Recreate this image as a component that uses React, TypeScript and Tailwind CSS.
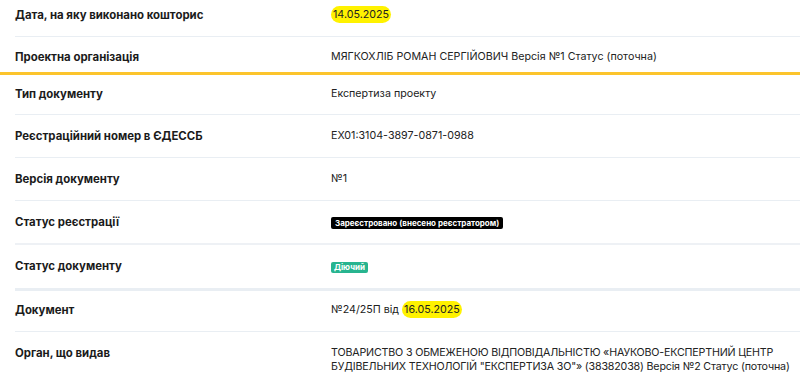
import React from 'react';

const Hl: React.FC<{ children: React.ReactNode }> = ({ children }) => (
  <span className="rounded-full bg-[#fff200] px-[2px] py-[2px]">{children}</span>
);

interface RowProps {
  label: string;
  children: React.ReactNode;
  className?: string;
  valueClass?: string;
}

const Row: React.FC<RowProps> = ({
  label,
  children,
  className = 'pt-[14px] pb-[14px] border-b border-[#e9eef3]',
  valueClass = '',
}) => (
  <div className={`grid grid-cols-[316px_1fr] ml-[15px] ${className}`}>
    <div className="font-bold text-[11.4px] text-[#1b1b1b]">{label}</div>
    <div className={`text-[10.7px] text-[#222] ${valueClass}`}>{children}</div>
  </div>
);

export default function App() {
  return (
    <div className="w-[800px] h-[381px] overflow-hidden bg-white leading-[14px] font-['Inter',sans-serif]">
      <Row label="Дата, на яку виконано кошторис" className="pt-[8px] pb-[14px] border-b border-[#e9eef3]">
        <Hl>14.05.2025</Hl>
      </Row>
      <Row label="Проектна організація" className="pt-[13px] pb-[8px]">
        МЯГКОХЛІБ РОМАН СЕРГІЙОВИЧ Версія №1 Статус (поточна)
      </Row>
      <div className="h-[3px] bg-[#fcc42c]" />
      <Row label="Тип документу" className="pt-[12px] pb-[13px] border-b border-[#e9eef3]">
        Експертиза проекту
      </Row>
      <Row label="Реєстраційний номер в ЄДЕССБ">EX01:3104-3897-0871-0988</Row>
      <Row label="Версія документу">№1</Row>
      <Row label="Статус реєстрації" className="pt-[14px] pb-[14px] border-b-2 border-[#eef1f5]">
        <span className="inline-block rounded-[2px] bg-black px-[4px] text-[8px] leading-[12px] font-bold text-white translate-y-[1px]">
          Зареєстровано (внесено реєстратором)
        </span>
      </Row>
      <Row label="Статус документу" className="pt-[14px] pb-[15px] border-b-[3px] border-[#e9eef3]">
        <span className="inline-block rounded-[2px] bg-[#27b48f] px-[3px] text-[8px] leading-[11px] font-bold text-white translate-y-[1px]">
          Діючий
        </span>
      </Row>
      <Row label="Документ" className="pt-[12px] pb-[14px] border-b border-[#e9eef3]">
        №24/25П від <Hl>16.05.2025</Hl>
      </Row>
      <Row label="Орган, що видав" className="pt-[14px] pb-[14px]" valueClass="tracking-[-0.18px] pr-[8px]">
        ТОВАРИСТВО З ОБМЕЖЕНОЮ ВІДПОВІДАЛЬНІСТЮ «НАУКОВО-ЕКСПЕРТНИЙ ЦЕНТР БУДІВЕЛЬНИХ ТЕХНОЛОГІЙ "ЕКСПЕРТИЗА ЗО"» (38382038) Версія №2 Статус (поточна)
      </Row>
    </div>
  );
}
